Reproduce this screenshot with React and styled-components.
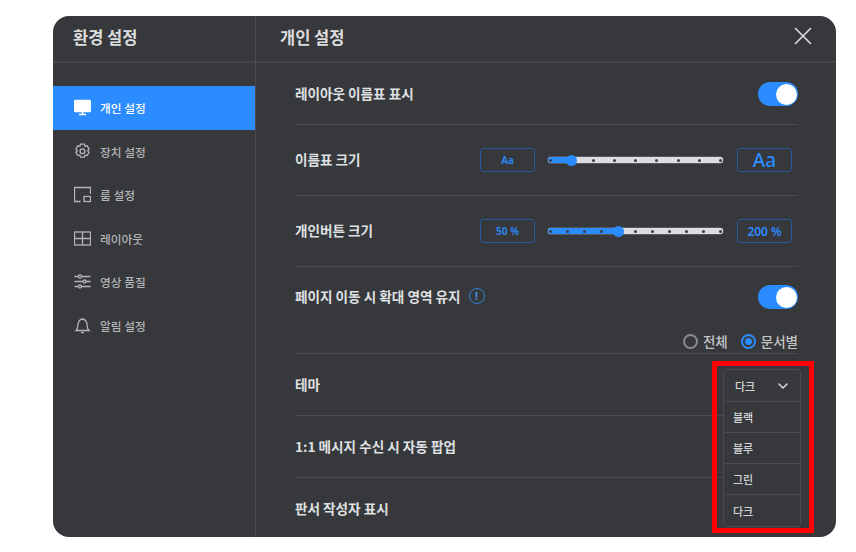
import React from 'react';
import styled, { createGlobalStyle } from 'styled-components';
import { ChevronDown, X } from 'lucide-react';

const GlobalStyle = createGlobalStyle`
  html, body {
    margin: 0;
    background: #fff;
    font-family: "Noto Sans CJK KR", "Noto Sans", sans-serif;
  }
`;

const Page = styled.div`
  width: 856px;
  height: 552px;
  padding: 16px 0 0 53px;
  box-sizing: border-box;
  overflow: hidden;
`;

const Modal = styled.div`
  width: 783px;
  height: 521px;
  display: grid;
  grid-template-columns: 203px 1fr;
  background: #37383c;
  border-radius: 16px;
  overflow: hidden;
  color: #e4e5e7;
`;

const Sidebar = styled.aside`
  border-right: 1px solid #4a4b4f;
`;

const Header = styled.header`
  height: 47px;
  box-sizing: border-box;
  border-bottom: 2px solid #45464a;
  display: flex;
  align-items: center;
  justify-content: space-between;
  font-size: 16.5px;
  font-weight: 700;
  padding: 0 18px 3px ${(props) => props.$left}px;
  color: #dcdddf;
`;

const Nav = styled.nav`
  padding-top: 23px;
`;

const NavItem = styled.div`
  height: 43.5px;
  display: flex;
  align-items: center;
  gap: 9px;
  padding-left: 21px;
  font-size: 11.7px;
  font-weight: 500;
  color: ${(props) => (props.$active ? '#ffffff' : '#b4b5b8')};
  background: ${(props) => (props.$active ? '#2b8cff' : 'transparent')};
`;

const NavIcon = styled.svg`
  width: 17px;
  height: 17px;
  flex: none;
  fill: none;
  stroke: currentColor;
  stroke-width: 1.3;
`;

const Main = styled.main`
  min-width: 0;
`;

const Close = styled(X)`
  width: 30px;
  height: 30px;
  margin-top: -2px;
  color: #dcdddf;
  stroke-width: 1.3;
`;

const Content = styled.div`
  position: relative;
  padding: 0 38px 0 39px;
`;

const Row = styled.div`
  height: ${(props) => props.$height}px;
  padding-top: ${(props) => props.$top}px;
  box-sizing: border-box;
  border-bottom: ${(props) => (props.$last ? 'none' : '1px solid #4a4b4f')};
  display: flex;
  align-items: flex-start;
  justify-content: space-between;
`;

const Label = styled.div`
  display: flex;
  align-items: center;
  gap: 8px;
  height: 20px;
  font-size: 13.6px;
  font-weight: 700;
  color: #dfe0e2;
`;

const Toggle = styled.div`
  width: 40px;
  height: 24px;
  margin-top: -1px;
  border-radius: 12px;
  background: #2b8cff;
  display: flex;
  align-items: center;
  justify-content: flex-end;
  padding-right: 1.5px;
  box-sizing: border-box;
`;

const ToggleKnob = styled.div`
  width: 21px;
  height: 21px;
  border-radius: 50%;
  background: #fff;
`;

const SizeControl = styled.div`
  display: flex;
  align-items: center;
  gap: 13px;
  margin-top: -1px;
  margin-right: 6px;
`;

const SizeBox = styled.div`
  width: 55px;
  height: 24px;
  box-sizing: border-box;
  border: 1px solid #245c9c;
  border-radius: 3px;
  display: flex;
  align-items: center;
  justify-content: center;
  color: #2b8cff;
  font-family: "Noto Sans", sans-serif;
  font-size: ${(props) => props.$size}px;
  font-weight: ${(props) => (props.$size > 15 ? 500 : 600)};
`;

const Track = styled.div`
  position: relative;
  width: 175px;
  height: 6px;
  margin-right: 1px;
  border-radius: 3px;
  background: #dcdde0;
  box-shadow: 0 0 0 0.5px #77787c;
  display: flex;
  align-items: center;
  justify-content: space-between;
  padding: 0 1px;
  box-sizing: border-box;
`;

const Fill = styled.div`
  position: absolute;
  left: 0;
  top: 0;
  height: 6px;
  border-radius: 3px;
  background: #2b8cff;
`;

const Thumb = styled.div`
  position: absolute;
  top: -2.5px;
  width: 11px;
  height: 11px;
  margin-left: -5.5px;
  border-radius: 50%;
  background: #2b8cff;
`;

const Dot = styled.span`
  position: relative;
  width: 3px;
  height: 3px;
  border-radius: 50%;
  background: #3c3d41;
`;

const Info = styled.span`
  width: 16px;
  height: 16px;
  box-sizing: border-box;
  border: 1.5px solid #2f80d8;
  border-radius: 50%;
  display: flex;
  align-items: center;
  justify-content: center;
  color: #4a9dfa;
  font-family: "Noto Sans", sans-serif;
  font-size: 10px;
  font-weight: 700;
`;

const RadioGroup = styled.div`
  position: absolute;
  right: 38px;
  top: 268px;
  display: flex;
  gap: 13px;
`;

const RadioLabel = styled.label`
  display: flex;
  align-items: center;
  gap: 5px;
  font-size: 13.5px;
  font-weight: 500;
  color: #c4c5c8;
  line-height: 20px;
`;

const RadioMark = styled.span`
  width: 15px;
  height: 15px;
  box-sizing: border-box;
  border-radius: 50%;
  border: 2px solid ${(props) => (props.$on ? '#2b8cff' : '#8a8b8e')};
  display: flex;
  align-items: center;
  justify-content: center;

  &::after {
    content: '';
    width: 7px;
    height: 7px;
    border-radius: 50%;
    background: ${(props) => (props.$on ? '#2b8cff' : 'transparent')};
  }
`;

const Highlight = styled.div`
  position: absolute;
  left: 456px;
  top: 298px;
  width: 102px;
  height: 172px;
  box-sizing: border-box;
  border: 5px solid #ff0000;
`;

const Dropdown = styled.div`
  position: absolute;
  left: 6px;
  top: 3px;
  width: 78px;
  height: 158px;
  box-sizing: border-box;
  border: 1px solid #4a4b4f;
  border-radius: 3px;
  background: #37383c;
`;

const DropdownHead = styled.div`
  height: 32px;
  box-sizing: border-box;
  display: flex;
  align-items: center;
  justify-content: space-between;
  padding: 0 9px 0 11px;
  font-size: 11px;
  font-weight: 500;
  color: #d5d6d8;
  border-bottom: 1px solid #4a4b4f;

  svg {
    width: 16px;
    height: 16px;
    stroke-width: 2.4;
  }
`;

const DropdownOption = styled.div`
  height: 31px;
  box-sizing: border-box;
  display: flex;
  align-items: center;
  padding-left: 9px;
  font-size: 11px;
  font-weight: 500;
  color: #d5d6d8;
  border-bottom: ${(props) => (props.$last ? 'none' : '1px solid #4a4b4f')};
`;

const navItems = [
  {
    label: '개인 설정',
    active: true,
    icon: (
      <>
        <rect x="0.5" y="1.5" width="16" height="11" rx="1" fill="currentColor" />
        <path d="M8.5 12.500v2.500M5 15.500h7" strokeWidth="1.600" />
      </>
    ),
  },
  {
    label: '장치 설정',
    icon: (
      <>
        <path d="M6.600 1.200h3.800l.7 2.100 2.100-.5 1.900 3.300-1.500 1.600 1.500 1.600-1.900 3.300-2.100-.5-.7 2.100H6.600l-.7-2.100-2.100.5-1.900-3.300 1.500-1.600-1.500-1.600 1.900-3.300 2.100.5z" />
        <circle cx="8.500" cy="8.300" r="2.400" />
      </>
    ),
  },
  {
    label: '룸 설정',
    icon: (
      <>
        <path d="M6.500 15.500h-6v-14h16v6.500" />
        <rect x="10" y="10.500" width="6.500" height="5" />
      </>
    ),
  },
  {
    label: '레이아웃',
    icon: (
      <>
        <rect x="0.500" y="2" width="16" height="13" />
        <path d="M8.500 2v13M.5 8.500h16" />
      </>
    ),
  },
  {
    label: '영상 품질',
    icon: (
      <>
        <path d="M.5 3.500h16M.5 8.500h16M.5 13.500h16" />
        <circle cx="6" cy="3.500" r="1.500" fill="#37383c" />
        <circle cx="10.500" cy="8.500" r="1.500" fill="#37383c" />
        <circle cx="6" cy="13.500" r="1.500" fill="#37383c" />
      </>
    ),
  },
  {
    label: '알림 설정',
    icon: (
      <>
        <path d="M2 13.500c1.300-1.200 1.800-2.500 1.800-5 0-3 1.900-6.500 4.700-6.500s4.700 3.500 4.700 6.500c0 2.500.5 3.800 1.800 5z" />
        <path d="M7 15.500h3" strokeWidth="1.400" />
      </>
    ),
  },
];

const Slider = ({ stops, value }) => {
  const step = 170 / (stops - 1);
  const x = 2.5 + step * value;
  return (
    <Track>
      <Fill style={{ width: x }} />
      {Array.from({ length: stops }, (_, i) => (
        <Dot key={i} />
      ))}
      <Thumb style={{ left: x }} />
    </Track>
  );
};

const SizeRow = ({ label, min, max, minSize, maxSize, stops, value }) => (
  <Row $height={71} $top={24}>
    <Label>{label}</Label>
    <SizeControl>
      <SizeBox $size={minSize}>{min}</SizeBox>
      <Slider stops={stops} value={value} />
      <SizeBox $size={maxSize}>{max}</SizeBox>
    </SizeControl>
  </Row>
);

const ToggleSwitch = () => (
  <Toggle>
    <ToggleKnob />
  </Toggle>
);

export default function App() {
  return (
    <Page>
      <GlobalStyle />
      <Modal>
        <Sidebar>
          <Header $left={20}>환경 설정</Header>
          <Nav>
            {navItems.map((item) => (
              <NavItem key={item.label} $active={item.active}>
                <NavIcon viewBox="0 0 17 17">{item.icon}</NavIcon>
                {item.label}
              </NavItem>
            ))}
          </Nav>
        </Sidebar>
        <Main>
          <Header $left={24}>
            개인 설정
            <Close />
          </Header>
          <Content>
            <Row $height={62} $top={20}>
              <Label>레이아웃 이름표 표시</Label>
              <ToggleSwitch />
            </Row>
            <SizeRow label="이름표 크기" min="Aa" max="Aa" minSize={10} maxSize={19} stops={9} value={1} />
            <SizeRow label="개인버튼 크기" min="50 %" max="200 %" minSize={10} maxSize={12} stops={11} value={4} />
            <Row $height={87} $top={19}>
              <Label>
                페이지 이동 시 확대 영역 유지
                <Info>!</Info>
              </Label>
              <ToggleSwitch />
            </Row>
            <RadioGroup>
              <RadioLabel>
                <RadioMark />
                전체
              </RadioLabel>
              <RadioLabel>
                <RadioMark $on />
                문서별
              </RadioLabel>
            </RadioGroup>
            <Row $height={62} $top={20}>
              <Label>테마</Label>
            </Row>
            <Row $height={62} $top={20}>
              <Label>1:1 메시지 수신 시 자동 팝업</Label>
            </Row>
            <Row $height={60} $top={20} $last>
              <Label>판서 작성자 표시</Label>
            </Row>
            <Highlight>
              <Dropdown>
                <DropdownHead>
                  다크
                  <ChevronDown />
                </DropdownHead>
                <DropdownOption>블랙</DropdownOption>
                <DropdownOption>블루</DropdownOption>
                <DropdownOption>그린</DropdownOption>
                <DropdownOption $last>다크</DropdownOption>
              </Dropdown>
            </Highlight>
          </Content>
        </Main>
      </Modal>
    </Page>
  );
}
